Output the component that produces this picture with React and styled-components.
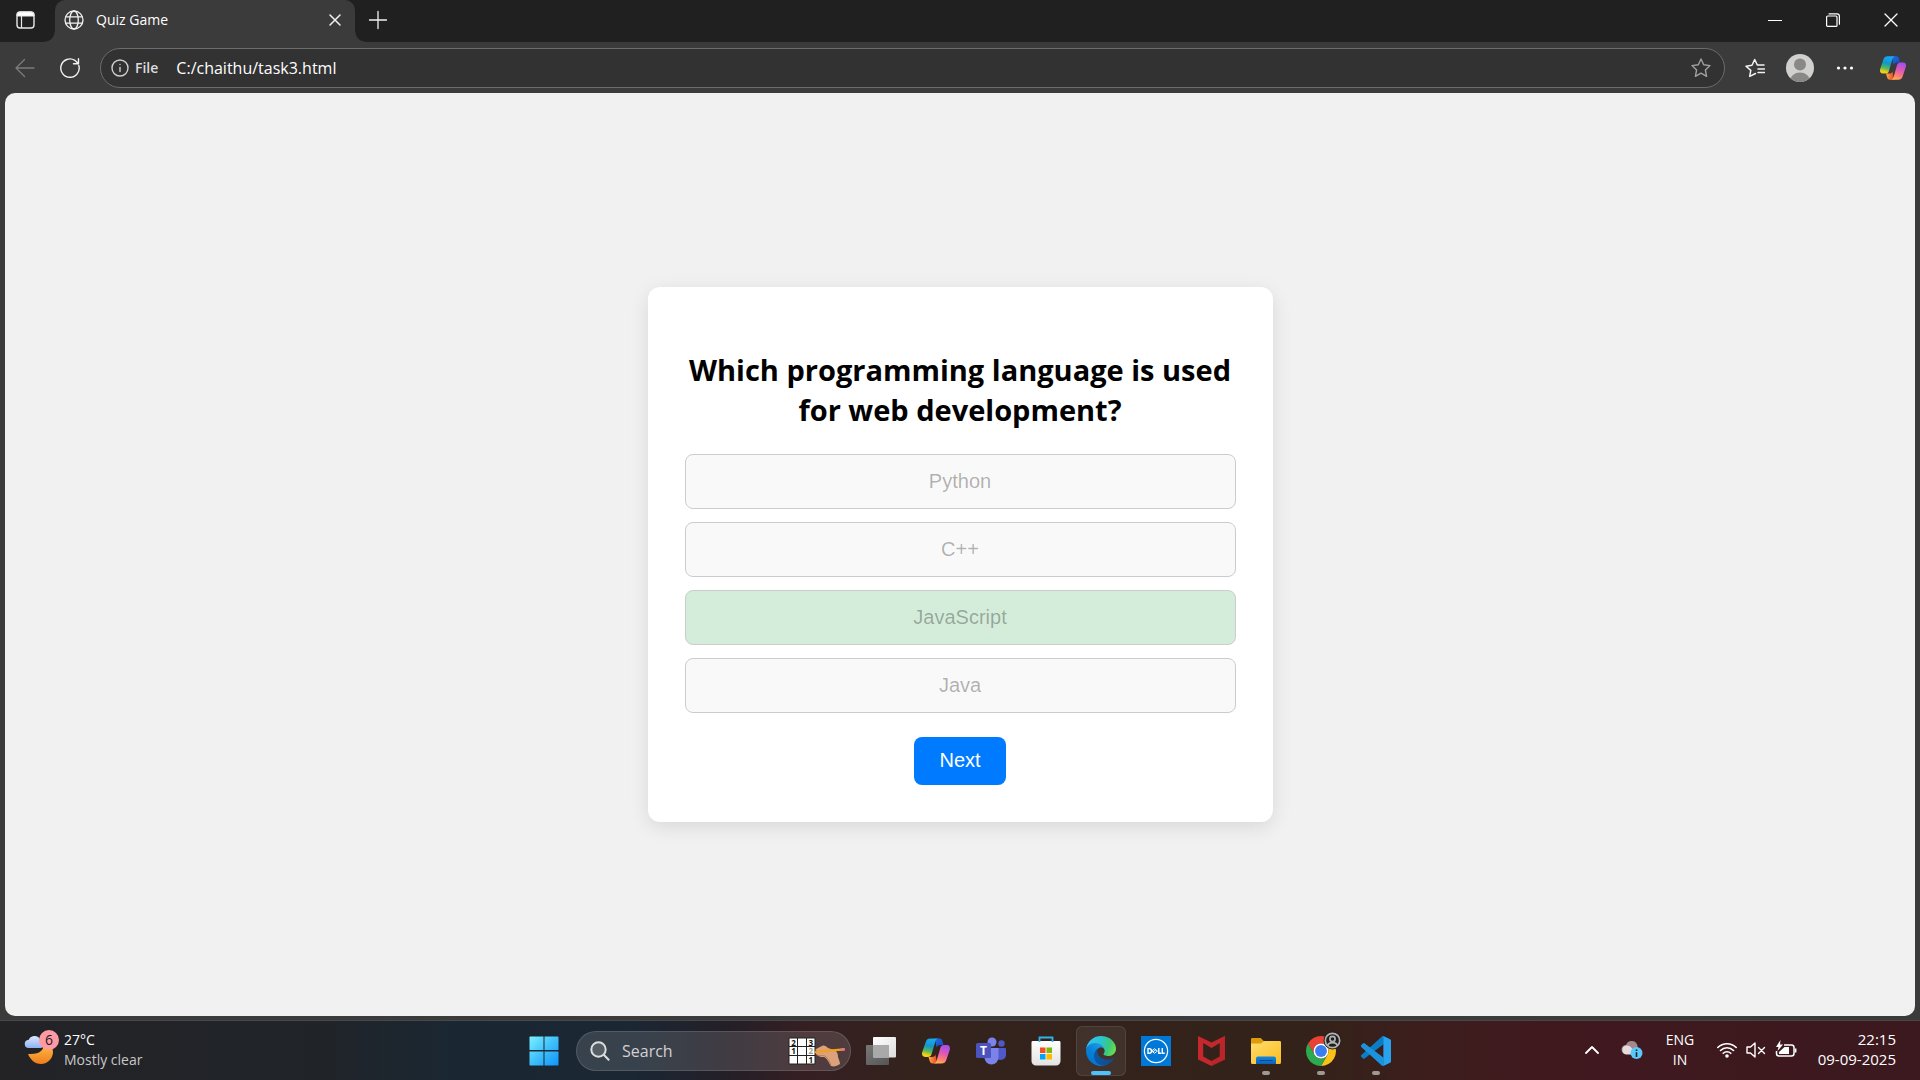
import React from "react";
import styled, { createGlobalStyle, css } from "styled-components";

const GlobalStyle = createGlobalStyle`
  *, *::before, *::after { box-sizing: border-box; }
  body { margin: 0; background: #3b3b3b; font-family: "Open Sans", "Noto Sans", sans-serif; color: #fff; }
  button, input { font-family: inherit; color: inherit; }
  svg { display: block; flex: none; }
`;

const Screen = styled.div`
  display: flex;
  flex-direction: column;
  height: 100vh;
  overflow: hidden;
`;

/* ---------- browser chrome ---------- */

const TabStrip = styled.header`
  display: flex;
  height: 42px;
  background: #202020;
`;

const IconButton = styled.button`
  display: flex;
  align-items: center;
  justify-content: center;
  flex: none;
  width: ${(p) => p.$width || 45}px;
  height: 40px;
  padding: 0;
  border: 0;
  background: none;
`;

const Tab = styled.div`
  position: relative;
  display: flex;
  align-items: center;
  width: 300px;
  height: 42px;
  padding: 0 0 2px 9px;
  gap: 12px;
  border-radius: 10px 10px 0 0;
  background: #3b3b3b;
  font-size: 14px;

  &::before, &::after {
    content: "";
    position: absolute;
    bottom: 0;
    width: 10px;
    height: 10px;
  }
  &::before { left: -10px; background: radial-gradient(circle at 0 0, transparent 9px, #3b3b3b 10px); }
  &::after { right: -10px; background: radial-gradient(circle at 100% 0, transparent 9px, #3b3b3b 10px); }
`;

const TabTitle = styled.span`
  flex: 1;
  line-height: 20px;
`;

const WindowControls = styled.div`
  display: flex;
  margin-left: auto;
`;

const Toolbar = styled.div`
  display: flex;
  align-items: center;
  height: 51px;
  padding: 0 2px;
  background: #3b3b3b;
`;

const AddressBar = styled.div`
  display: flex;
  align-items: center;
  flex: 1;
  height: 40px;
  margin: 0 7px 0 8px;
  padding: 0 1px 0 10px;
  border: 1px solid #6c6c6c;
  border-radius: 20px;
  background: #323232;
`;

const SchemeLabel = styled.label`
  padding: 0 18px 0 6px;
  font-size: 14px;
  font-weight: 600;
  color: #dcdcdc;
`;

const AddressInput = styled.input`
  flex: 1;
  min-width: 0;
  padding: 0;
  border: 0;
  outline: 0;
  background: none;
  font-size: 16px;
  line-height: 24px;
`;

/* ---------- quiz page ---------- */

const Page = styled.main`
  display: flex;
  align-items: center;
  justify-content: center;
  flex: 1;
  margin: 0 5px 4px;
  border-radius: 10px;
  background: #f1f1f1;
`;

const Card = styled.section`
  display: flex;
  flex-direction: column;
  align-items: center;
  width: 625px;
  padding: 37px;
  border-radius: 12px;
  background: #fff;
  box-shadow: 0 5px 19px rgba(0, 0, 0, 0.1);
`;

const Question = styled.h2`
  margin: 26px 0 24px;
  font-size: 29px;
  line-height: 40px;
  font-weight: 700;
  text-align: center;
  color: #000;
`;

const Options = styled.div`
  display: grid;
  gap: 13px;
  width: 100%;
`;

const Option = styled.button`
  height: 55px;
  padding: 0 0 1px;
  border: 1px solid #ccc;
  border-radius: 8px;
  background: ${(p) => (p.$correct ? "#d4edda" : "#f9f9f9")};
  font-family: "Liberation Sans", Arial, sans-serif;
  font-size: 20px;
  color: rgba(16, 16, 16, 0.33);
`;

const NextButton = styled.button`
  height: 48px;
  margin-top: 24px;
  padding: 0 25px 2px;
  border: 0;
  border-radius: 8px;
  background: #007bff;
  font-family: "Liberation Sans", Arial, sans-serif;
  font-size: 20px;
  color: #fff;
`;

/* ---------- taskbar ---------- */

const Taskbar = styled.footer`
  display: grid;
  grid-template-columns: 1fr auto 1fr;
  align-items: center;
  height: 60px;
  border-top: 1px solid #48484a;
  background: linear-gradient(90deg,
    #232326 0%, #202429 17%, #1a2733 24%, #1b2733 33%, #241f27 38%, #361f23 42%,
    #33231c 48%, #33221a 68%, #3c1e1c 74%, #40191f 80%, #3b191e 100%);
`;

const Weather = styled.button`
  display: flex;
  align-items: center;
  justify-self: start;
  gap: 4px;
  padding: 0 0 2px 24px;
  border: 0;
  background: none;
  font-size: 14px;
  line-height: 20px;
  text-align: left;
`;

const WeatherIcon = styled.span`
  position: relative;
  width: 36px;
  height: 40px;
`;

const Badge = styled.span`
  position: absolute;
  top: 0;
  right: 1px;
  width: 20px;
  height: 20px;
  border-radius: 50%;
  background: #ff99a4;
  font-size: 14px;
  line-height: 20px;
  text-align: center;
  color: #1b1b1b;
`;

const Muted = styled.span`
  display: block;
  color: #c8c8c8;
`;

const Apps = styled.nav`
  display: flex;
  align-items: center;
  gap: 5px;
`;

const AppButton = styled.button`
  position: relative;
  display: flex;
  align-items: center;
  justify-content: center;
  width: 50px;
  height: 50px;
  padding: 0;
  border: 1px solid ${(p) => (p.$active ? "rgba(255,255,255,.09)" : "transparent")};
  border-radius: 6px;
  background: ${(p) => (p.$active ? "rgba(255,255,255,.07)" : "none")};

  ${(p) =>
    (p.$active || p.$running) &&
    css`
      &::after {
        content: "";
        position: absolute;
        bottom: 0;
        width: ${p.$active ? 20 : 8}px;
        height: 4px;
        border-radius: 2px;
        background: ${p.$active ? "#4cc2ff" : "#a09894"};
      }
    `}
`;

const SearchBox = styled.label`
  display: flex;
  align-items: center;
  width: 275px;
  height: 40px;
  margin-left: 2px;
  padding: 0 4px 0 13px;
  gap: 12px;
  border: 1px solid rgba(255, 255, 255, 0.13);
  border-radius: 20px;
  background: rgba(255, 255, 255, 0.13);
`;

const SearchInput = styled.input`
  flex: 1;
  min-width: 0;
  padding: 0;
  border: 0;
  outline: 0;
  background: none;
  font-size: 16px;
  line-height: 22px;

  &::placeholder { color: #d2d0d2; opacity: 1; }
`;

const Tray = styled.div`
  display: flex;
  align-items: center;
  justify-self: end;
  padding-right: 24px;
  font-size: 14px;
  line-height: 20px;
`;

const TrayButton = styled.button`
  display: flex;
  align-items: center;
  justify-content: center;
  width: ${(p) => p.$width}px;
  height: 50px;
  padding: 0 0 1px;
  border: 0;
  background: none;
  font-size: 14px;
  line-height: 20px;
  text-align: ${(p) => p.$align || "center"};
  gap: 9px;
`;

const Clock = styled(TrayButton)`
  justify-content: flex-end;
  padding-bottom: 3px;
  font-size: 15px;
`;

/* ---------- drawings ---------- */

const Line = ({ size = 20, color = "#f2f2f2", width = 1.4, box = 20, children }) => (
  <svg width={size} height={size} viewBox={`0 0 ${box} ${box}`} fill="none" stroke={color}
    strokeWidth={width} strokeLinecap="round" strokeLinejoin="round" aria-hidden="true">
    {children}
  </svg>
);

const starPath = "M10 1l2.7 5.8 6.3.8-4.6 4.4 1.2 6.3L10 15.2l-5.600 3.100L5.600 12 1 7.600l6.300-.8z";

const CopilotLogo = ({ id, size = 30 }) => (
  <svg width={size} height={size} viewBox="0 0 30 30" aria-hidden="true">
    <defs>
      <linearGradient id={`${id}a`} x1="0.5" y1="0" x2="0.3" y2="1">
        <stop offset="0" stopColor="#18a9f5" /><stop offset=".4" stopColor="#1595c9" />
        <stop offset=".68" stopColor="#55b95a" /><stop offset=".9" stopColor="#f5cf16" />
      </linearGradient>
      <linearGradient id={`${id}b`} x1="0.6" y1="0" x2="0.3" y2="1">
        <stop offset="0" stopColor="#a64df0" /><stop offset=".45" stopColor="#e35ab0" />
        <stop offset=".8" stopColor="#ff8568" /><stop offset="1" stopColor="#ffb357" />
      </linearGradient>
      <linearGradient id={`${id}c`} x1="0" y1="0" x2="1" y2="1">
        <stop offset="0" stopColor="#1b6fe0" /><stop offset="1" stopColor="#1746c8" />
      </linearGradient>
      <linearGradient id={`${id}d`} x1="0" y1="0" x2="1" y2="0">
        <stop offset="0" stopColor="#ffad3e" /><stop offset="1" stopColor="#e8432c" />
      </linearGradient>
    </defs>
    <path d="M14 2.500h4.500c1.800 0 2.600 1.200 3 2.700l1 3.800H19c-2 0-3 1-3.500 2.500z" fill={`url(#${id}c)`} />
    <path d="M16 27.500h-4.300c-1.800 0-2.600-1.200-3.100-2.700L7.500 21H11c2 0 3-1 3.500-2.500z" fill={`url(#${id}d)`} />
    <path d="M9.500 2.500H17c-1.500.3-2.200 1.600-2.700 3.200l-3.700 12.400c-.6 2-1.600 2.900-3.600 2.900H4.300C1.500 21 .6 18.700 1.200 16.300L4.700 6C5.500 3.600 7 2.500 9.500 2.500z" fill={`url(#${id}a)`} />
    <path d="M20.500 27.500H13c1.500-.3 2.200-1.600 2.700-3.200l3.700-12.400c.6-2 1.600-2.900 3.600-2.900h2.700c2.800 0 3.700 2.300 3.100 4.700L25.300 24c-.8 2.400-2.300 3.500-4.800 3.500z" fill={`url(#${id}b)`} />
  </svg>
);

const EdgeLogo = () => (
  <svg width="30" height="30" viewBox="0 0 256 256" aria-hidden="true">
    <defs>
      <linearGradient id="eg1" x1="60" y1="180" x2="240" y2="180" gradientUnits="userSpaceOnUse">
        <stop offset="0" stopColor="#0c59a4" /><stop offset="1" stopColor="#114a8b" />
      </linearGradient>
      <linearGradient id="eg2" x1="150" y1="90" x2="45" y2="205" gradientUnits="userSpaceOnUse">
        <stop offset="0" stopColor="#1b9de2" /><stop offset=".16" stopColor="#1595df" />
        <stop offset=".67" stopColor="#0680d7" /><stop offset="1" stopColor="#0078d4" />
      </linearGradient>
      <linearGradient id="eg3" x1="20" y1="60" x2="250" y2="140" gradientUnits="userSpaceOnUse">
        <stop offset="0" stopColor="#35c1f1" /><stop offset=".4" stopColor="#2bc3d2" />
        <stop offset=".75" stopColor="#3cc97c" /><stop offset="1" stopColor="#6be04c" />
      </linearGradient>
    </defs>
    <g transform="translate(-4.63 -4.92)">
      <path fill="url(#eg1)" d="M235.680 195.460a93.730 93.730 0 0 1-10.540 4.710 101.870 101.870 0 0 1-35.900 6.460c-47.320 0-88.540-32.550-88.540-74.320A31.480 31.480 0 0 1 117.130 105c-42.800 1.800-53.800 46.400-53.800 72.530 0 73.880 68.090 81.370 82.760 81.370 7.910 0 19.840-2.300 27-4.560l1.310-.44a128.340 128.340 0 0 0 66.600-52.800 4 4 0 0 0-5.320-5.640z" />
      <path fill="url(#eg2)" d="M110.340 246.340A79.200 79.200 0 0 1 87.600 225a80.720 80.720 0 0 1 29.530-120c3.120-1.470 8.450-4.130 15.540-4a32.350 32.350 0 0 1 25.690 13 31.880 31.880 0 0 1 6.360 18.660c0-.21 24.460-79.600-80-79.600-43.900 0-80 41.660-80 78.210a130.150 130.150 0 0 0 12.110 56 128 128 0 0 0 156.380 67.110 75.550 75.550 0 0 1-62.780-8z" />
      <path fill="url(#eg3)" d="M156.940 153.780c-.81 1.050-3.300 2.500-3.300 5.660 0 2.610 1.700 5.120 4.720 7.230 14.380 10 41.490 8.680 41.560 8.680a59.560 59.560 0 0 0 30.270-8.350 61.380 61.380 0 0 0 30.430-52.880c.26-22.410-8-37.310-11.340-43.910C228.090 28.760 182.350 4.920 132.610 4.920a128 128 0 0 0-128 126.200c.48-36.540 36.800-66.050 80-66.050 3.500 0 23.460.34 42 10.070 16.340 8.580 24.900 18.940 30.850 29.210 6.180 10.670 7.280 24.150 7.280 29.520s-2.740 13.330-7.800 19.910z" />
    </g>
  </svg>
);

const WindowsLogo = () => (
  <svg width="30" height="30" viewBox="0 0 30 30" aria-hidden="true">
    <defs>
      <linearGradient id="win" x1="0" y1="0" x2="30" y2="30" gradientUnits="userSpaceOnUse">
        <stop offset="0" stopColor="#7df3ff" /><stop offset=".5" stopColor="#3fc0fb" /><stop offset="1" stopColor="#0d92fb" />
      </linearGradient>
    </defs>
    <path fill="url(#win)" d="M1 .5h13.500V14H.5V1zM15.500.5H29l.5.500v13h-14zM.5 15.500h14V29.500H1L.5 29zM15.500 15.500h14V29l-.5.500H15.500z" />
  </svg>
);

const TaskViewIcon = () => (
  <svg width="32" height="30" viewBox="0 0 32 30" aria-hidden="true">
    <defs>
      <linearGradient id="tv" x1="0" y1="0" x2="1" y2="1"><stop offset="0" stopColor="#fff" /><stop offset="1" stopColor="#dcdcdc" /></linearGradient>
      <linearGradient id="tv2" x1="0" y1="0" x2="1" y2="1"><stop offset="0" stopColor="#777" /><stop offset="1" stopColor="#555" /></linearGradient>
    </defs>
    <rect x="1" y="9" width="23" height="20" rx="1" fill="url(#tv2)" />
    <rect x="8" y="1" width="23" height="20.500" rx="1" fill="url(#tv)" />
    <path d="M8 9h16v12.500H9a1 1 0 0 1-1-1z" fill="#a9a9a9" />
  </svg>
);

const TeamsIcon = () => (
  <svg width="30" height="28" viewBox="0 0 30 28" aria-hidden="true">
    <circle cx="25.500" cy="6.500" r="3.200" fill="#5059c9" />
    <path d="M20 11h9a1 1 0 0 1 1 1v6.500a5.500 5.500 0 0 1-10 2z" fill="#5059c9" />
    <circle cx="16" cy="5" r="4.500" fill="#7b83eb" />
    <path d="M9 11h13.500v9.500a7 7 0 0 1-14 0V11z" fill="#7b83eb" />
    <rect x="0" y="6" width="15" height="15" rx="1.500" fill="#4b53bc" />
    <text x="7.500" y="18" textAnchor="middle" fontFamily="Open Sans" fontWeight="700" fontSize="12" fill="#fff">T</text>
  </svg>
);

const StoreIcon = () => (
  <svg width="30" height="30" viewBox="0 0 30 30" aria-hidden="true">
    <defs><linearGradient id="st" x1="0" y1="0" x2="0" y2="1"><stop offset="0" stopColor="#fff" /><stop offset="1" stopColor="#e2e2e2" /></linearGradient></defs>
    <path d="M.5 6.500a1.500 1.500 0 0 1 1-1.500h27a1.500 1.500 0 0 1 1 1.500V25a4.500 4.500 0 0 1-4.500 4.500H5A4.500 4.500 0 0 1 .5 25z" fill="url(#st)" />
    <path d="M8.500 6V1.500h13V6" fill="none" stroke="#2cb5e8" strokeWidth="1.800" />
    <path d="M9 11.500h5.500V17H9z" fill="#f25022" /><path d="M15.500 11.500H21V17h-5.500z" fill="#7fba00" />
    <path d="M9 18h5.500v5.500H9z" fill="#00a4ef" /><path d="M15.500 18H21v5.500h-5.500z" fill="#ffb900" />
  </svg>
);

const DellIcon = () => (
  <svg width="30" height="30" viewBox="0 0 30 30" aria-hidden="true">
    <rect width="30" height="30" fill="#0078d7" />
    <circle cx="15" cy="15" r="11.600" fill="none" stroke="#fff" strokeWidth="1.200" />
    <g fill="none" stroke="#fff" strokeWidth="1.400">
      <path d="M7 12.600h1.200a2.200 2.200 0 0 1 0 4.600H7z" />
      <path d="M10.600 15l3-2.300 2.800 2.300-2.800 2.300zM12 15.800l3-2.200" strokeWidth="1" />
      <path d="M17.800 12v5.200h2.400M21.300 12v5.200h2.400" />
    </g>
  </svg>
);

const McAfeeIcon = () => (
  <svg width="27" height="30" viewBox="0 0 27 30" aria-hidden="true">
    <path fill="#c5282c" fillRule="evenodd" d="M0 0l13.500 6.500L27 0v23.500L13.500 30 0 23.500zM5.200 7v13.500l8.300 4.500 8.300-4.500V7l-8.300 5z" />
    <path fill="#a81f24" opacity=".35" d="M13.500 25l8.300-4.500V7L27 0v23.500L13.500 30z" />
  </svg>
);

const FolderIcon = () => (
  <svg width="30" height="28" viewBox="0 0 30 28" aria-hidden="true">
    <defs>
      <linearGradient id="fo" x1="0" y1="0" x2="1" y2="1"><stop offset="0" stopColor="#ffdd6b" /><stop offset="1" stopColor="#fbbc24" /></linearGradient>
      <linearGradient id="fb" x1="0" y1="0" x2="0" y2="1"><stop offset="0" stopColor="#1787df" /><stop offset="1" stopColor="#0b62b8" /></linearGradient>
    </defs>
    <path d="M0 2.200A1.200 1.200 0 0 1 1.200 1h8.500l3 3H28.500A1.500 1.500 0 0 1 30 5.500V10H0z" fill="#dd9c0c" />
    <path d="M0 6.500h10l3-2.500h15.500A1.500 1.500 0 0 1 30 5.500v20a1.500 1.500 0 0 1-1.500 1.500h-27A1.500 1.500 0 0 1 0 25.500z" fill="url(#fo)" />
    <path d="M5 27v-5.500a2 2 0 0 1 2-2h16a2 2 0 0 1 2 2V27z" fill="url(#fb)" />
    <path d="M9 23.500h12" stroke="#0a4a8c" strokeWidth="1.200" strokeLinecap="round" />
  </svg>
);

const ChromeIcon = () => (
  <svg width="40" height="40" viewBox="0 0 40 40" aria-hidden="true">
    <g transform="translate(3.600 3.600) scale(.683)">
      <path fill="#ea4335" d="M4.950 13L14.470 29.500A11 11 0 0 1 24 13H43.050A22 22 0 0 0 4.950 13z" />
      <path fill="#fbc116" d="M43.050 13H24A11 11 0 0 1 33.530 29.500L24 46A22 22 0 0 0 43.050 13z" />
      <path fill="#2da94f" d="M24 46l9.530-16.500A11 11 0 0 1 14.470 29.500L4.950 13A22 22 0 0 0 24 46z" />
      <circle cx="24" cy="24" r="11" fill="#fff" />
      <circle cx="24" cy="24" r="8.700" fill="#3b7df0" />
    </g>
    <circle cx="31.500" cy="9.500" r="9" fill="#1f1e1e" />
    <g fill="none" stroke="#b4b2b0" strokeWidth="1.700">
      <circle cx="31.500" cy="9.500" r="7.200" />
      <circle cx="31.500" cy="8" r="2.600" />
      <path d="M26.600 14.500c1-2.200 2.700-2.800 4.900-2.800s3.900.6 4.900 2.800" />
    </g>
  </svg>
);

const VsCodeIcon = () => (
  <svg width="30" height="30" viewBox="0 0 24 24" aria-hidden="true">
    <path fill="#0a7dc7" d="M23.150 2.587L18.210.21a1.494 1.494 0 0 0-1.705.29l-9.460 8.630-4.120-3.128a.999.999 0 0 0-1.276.057L.327 7.261A1 1 0 0 0 .326 8.740L3.899 12 .326 15.260a1 1 0 0 0 .001 1.479L1.650 17.940a.999.999 0 0 0 1.276.057l4.120-3.128 9.460 8.630a1.492 1.492 0 0 0 1.704.29l4.942-2.377A1.500 1.500 0 0 0 24 20.060V3.939a1.500 1.500 0 0 0-.85-1.352zm-5.146 14.861L10.826 12l7.178-5.448v10.896z" />
    <path fill="#29a3ee" d="M18 .12l5.150 2.467A1.500 1.500 0 0 1 24 3.939V20.060a1.500 1.500 0 0 1-.85 1.352L18 23.880z" />
    <path fill="#1b93dc" d="M.327 7.261L1.650 6.059a1 1 0 0 1 1.276-.057L18 17.448v6.350a1.500 1.500 0 0 1-1.500-.3L.326 8.740a1 1 0 0 1 0-1.479z" />
  </svg>
);

const SudokuArt = () => (
  <svg width="58" height="32" viewBox="0 0 58 32" aria-hidden="true">
    <rect x="1" y="3" width="26" height="26" fill="#fff" />
    <path d="M1 3h26v26H1zM9.500 3v26M18.500 3v26M1 11.500h26M1 20.500h26" fill="none" stroke="#222" strokeWidth="1" />
    <g fontFamily="Open Sans" fontWeight="700" fontSize="8" textAnchor="middle" fill="#111">
      <text x="5.500" y="10.500">2</text><text x="22.700" y="10.500">3</text>
      <text x="5.500" y="19">1</text><text x="22.700" y="19" fill="#999">2</text>
      <text x="22.700" y="28">1</text>
    </g>
    <path d="M27 15c2-2 5-3 7-4 2-1 4 0 6 2l6 2c3 1 4 4 4 7 1 3 2 5 2 7-3 2-6 3-9 2-2-3-4-8-7-9-3 0-5 0-6-2-2 0-3-2-1-4z" fill="#dba27c" />
    <path d="M29 20c3 1 6 0 8 1 3 2 4 5 6 9" fill="none" stroke="#b97f5b" strokeWidth="1" />
    <path d="M26 17.500l6-1.200 24-2" fill="none" stroke="#f2a01e" strokeWidth="2.200" />
    <path d="M53 14.600l4-.4" stroke="#e2728c" strokeWidth="2.600" />
  </svg>
);

const MoonCloud = () => (
  <svg width="32" height="40" viewBox="0 0 32 40" aria-hidden="true">
    <defs>
      <linearGradient id="moon" x1="0" y1="0" x2="0" y2="1"><stop offset="0" stopColor="#ffc24a" /><stop offset="1" stopColor="#f07c1c" /></linearGradient>
      <linearGradient id="cloud" x1="0" y1="0" x2="0" y2="1"><stop offset="0" stopColor="#dce9ff" /><stop offset="1" stopColor="#8eb2f2" /></linearGradient>
    </defs>
    <path d="M19 14c2 5-3 11-15 10 3 7 8 10 13 10 7 0 12-6 12-12 0-3-2-7-5-9z" fill="url(#moon)" />
    <path d="M5 18a4 4 0 0 1-.5-8A6.500 6.500 0 0 1 16 9a4.600 4.600 0 0 1 1 9z" fill="url(#cloud)" />
  </svg>
);

const apps = [
  { name: "Task View", icon: <TaskViewIcon /> },
  { name: "Copilot", icon: <CopilotLogo id="tb" /> },
  { name: "Microsoft Teams", icon: <TeamsIcon /> },
  { name: "Microsoft Store", icon: <StoreIcon /> },
  { name: "Microsoft Edge", icon: <EdgeLogo />, active: true },
  { name: "Dell", icon: <DellIcon /> },
  { name: "McAfee", icon: <McAfeeIcon /> },
  { name: "File Explorer", icon: <FolderIcon />, running: true },
  { name: "Google Chrome", icon: <ChromeIcon />, running: true },
  { name: "Visual Studio Code", icon: <VsCodeIcon />, running: true },
];

const options = ["Python", "C++", "JavaScript", "Java"];

export default function App() {
  return (
    <Screen>
      <GlobalStyle />
      <TabStrip>
        <IconButton $width={55} aria-label="Tab actions">
          <svg width="30" height="20" viewBox="0 0 30 20" fill="none" stroke="#e8e8e8" aria-hidden="true">
            <rect x="4" y="2" width="17" height="16" rx="3" strokeWidth="1.400" />
            <path d="M4 6V5a3 3 0 0 1 3-3h11a3 3 0 0 1 3 3v1z" fill="#fff" />
            <path d="M8.500 6v12" strokeWidth="1.200" />
          </svg>
        </IconButton>
        <Tab>
          <Line size={20} width={1.3}>
            <circle cx="10" cy="10" r="9" />
            <ellipse cx="10" cy="10" rx="4.300" ry="9" />
            <path d="M1.800 6.800h16.400M1.800 13.200h16.400" />
          </Line>
          <TabTitle>Quiz Game</TabTitle>
          <IconButton $width={40} aria-label="Close tab">
            <Line size={12} box={12} width={1.5}><path d="M1 1l10 10M11 1L1 11" /></Line>
          </IconButton>
        </Tab>
        <IconButton aria-label="New tab">
          <Line size={20} width={1.3}><path d="M10 1.500v17M1.500 10h17" /></Line>
        </IconButton>
        <WindowControls>
          <IconButton $width={58} aria-label="Minimize">
            <Line size={14} box={14} color="#fff" width={1.2}><path d="M.5 7.500h13" /></Line>
          </IconButton>
          <IconButton $width={58} aria-label="Restore">
            <Line size={14} box={14} color="#fff" width={1.2}>
              <rect x=".6" y="3" width="10.400" height="10.400" rx="1" />
              <path d="M3 .8h8a2.400 2.400 0 0 1 2.400 2.400v8" />
            </Line>
          </IconButton>
          <IconButton $width={58} aria-label="Close">
            <Line size={14} box={14} color="#fff" width={1.3}><path d="M1 1l12 12M13 1L1 13" /></Line>
          </IconButton>
        </WindowControls>
      </TabStrip>

      <Toolbar>
        <IconButton aria-label="Back">
          <Line color="#7c7c7c" width={1.3}><path d="M19 10H1M9.500 1.500L1 10l8.500 8.500" /></Line>
        </IconButton>
        <IconButton aria-label="Refresh">
          <Line width={1.4}><path d="M18.800 7.500A9.200 9.200 0 1 1 15 2.400l3.300 3.200M18.500.8v5h-5" /></Line>
        </IconButton>
        <AddressBar>
          <Line size={18} box={18} color="#cfcfcf" width={1.4}>
            <circle cx="9" cy="9" r="8" /><path d="M9 8.500v4" /><path d="M9 5.500v.1" />
          </Line>
          <SchemeLabel htmlFor="address">File</SchemeLabel>
          <AddressInput id="address" defaultValue="C:/chaithu/task3.html" spellCheck="false" />
          <IconButton aria-label="Add to favorites">
            <Line color="#a0a0a0" width={1.4}><path d={starPath} /></Line>
          </IconButton>
        </AddressBar>
        <IconButton aria-label="Favorites">
          <Line width={1.5}>
            <path d="M10.500 15.500l-5.800 2.900 1.100-6L1 8.200l6-.9 2.700-5.800 2.600 5.500h6.700M13 11h6.500M13 14.500h6.500" />
          </Line>
        </IconButton>
        <IconButton aria-label="Profile">
          <svg width="28" height="28" viewBox="0 0 28 28" aria-hidden="true">
            <clipPath id="avatar"><circle cx="14" cy="14" r="14" /></clipPath>
            <g clipPath="url(#avatar)">
              <rect width="28" height="28" fill="#d2d0ce" />
              <circle cx="14" cy="10.500" r="6" fill="#8a8886" />
              <ellipse cx="14" cy="27" rx="10" ry="8.500" fill="#8a8886" />
            </g>
          </svg>
        </IconButton>
        <IconButton aria-label="Settings and more">
          <svg width="18" height="4" viewBox="0 0 18 4" fill="#fff" aria-hidden="true">
            <circle cx="2.500" cy="2" r="1.600" /><circle cx="9" cy="2" r="1.600" /><circle cx="15.500" cy="2" r="1.600" />
          </svg>
        </IconButton>
        <IconButton $width={51} aria-label="Copilot"><CopilotLogo id="nav" size={28} /></IconButton>
      </Toolbar>

      <Page>
        <Card>
          <Question>Which programming language is used for web development?</Question>
          <Options>
            {options.map((text) => (
              <Option key={text} disabled $correct={text === "JavaScript"}>{text}</Option>
            ))}
          </Options>
          <NextButton>Next</NextButton>
        </Card>
      </Page>

      <Taskbar>
        <Weather>
          <WeatherIcon><MoonCloud /><Badge>6</Badge></WeatherIcon>
          <span>27°C<Muted>Mostly clear</Muted></span>
        </Weather>
        <Apps>
          <AppButton aria-label="Start"><WindowsLogo /></AppButton>
          <SearchBox>
            <svg width="20" height="20" viewBox="0 0 20 20" fill="rgba(255,255,255,.15)" stroke="#dedede" strokeWidth="2" strokeLinecap="round" aria-hidden="true">
              <circle cx="8.500" cy="8.500" r="7.200" /><path d="M14 14l4.600 4.800" />
            </svg>
            <SearchInput placeholder="Search" aria-label="Search" />
            <SudokuArt />
          </SearchBox>
          {apps.map((a) => (
            <AppButton key={a.name} aria-label={a.name} $active={a.active} $running={a.running}>{a.icon}</AppButton>
          ))}
        </Apps>
        <Tray>
          <TrayButton $width={40} aria-label="Show hidden icons">
            <Line size={14} box={14} color="#fff" width={1.8}><path d="M1 10l6-6 6 6" /></Line>
          </TrayButton>
          <TrayButton $width={40} aria-label="OneDrive">
            <svg width="22" height="20" viewBox="0 0 22 20" aria-hidden="true">
              <path d="M5 14a4.500 4.500 0 0 1 0-9A6 6 0 0 1 16.500 5.500V14z" fill="#a3898c" />
              <path d="M5 14.500a4.600 4.600 0 0 1 0-9c3-.5 5 1 6 3l1 6z" fill="#e4dcdd" />
              <circle cx="15.500" cy="13" r="6" fill="#5ac8fa" />
              <path d="M15.500 9.500v1.500M15.500 12.200V17" stroke="#222" strokeWidth="1.600" />
            </svg>
          </TrayButton>
          <TrayButton $width={56}><span>ENG<br />IN</span></TrayButton>
          <TrayButton $width={98} aria-label="Network, sound and battery">
            <Line color="#fff" width={1.6}>
              <path d="M.8 7.500a13 13 0 0 1 18.400 0M3.500 10.500a9 9 0 0 1 13 0M6.200 13.300a5.300 5.300 0 0 1 7.600 0" />
              <circle cx="10" cy="16" r="1" fill="#fff" />
            </Line>
            <Line color="#fff" width={1.4}>
              <path d="M1 7h3.500L9 3v14l-4.500-4H1zM12.500 7.500l6 6M18.500 7.500l-6 6" />
            </Line>
            <svg width="22" height="20" viewBox="0 0 22 20" fill="none" stroke="#fff" strokeWidth="1.500" aria-hidden="true">
              <path d="M9 5h7.500A2.500 2.500 0 0 1 19 7.500v6a2.500 2.500 0 0 1-2.500 2.500H4a2.500 2.500 0 0 1-2.500-2.500V11M20.700 8.500v4" />
              <path d="M9.500 7H14v7H4v-2z" fill="#fff" stroke="none" />
              <path d="M5.500 0L1 7h2.500L2.500 11 8 4.500H5z" fill="#fff" stroke="none" />
            </svg>
          </TrayButton>
          <Clock $width={90} $align="right"><span>22:15<br />09-09-2025</span></Clock>
        </Tray>
      </Taskbar>
    </Screen>
  );
}
